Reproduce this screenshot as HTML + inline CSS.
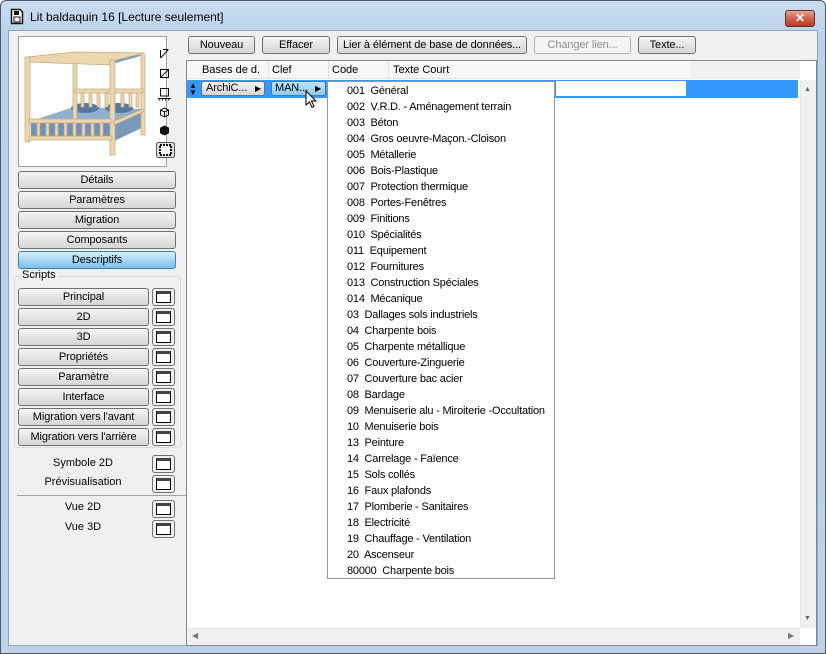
<!DOCTYPE html>
<html><head><meta charset="utf-8"><style>
*{box-sizing:border-box;margin:0;padding:0}
body{width:826px;height:654px;background:#fff;font-family:"Liberation Sans",Arial,sans-serif;font-size:11px;color:#000;position:relative;overflow:hidden}
.a{position:absolute}
.win{left:0;top:0;width:826px;height:654px;background:linear-gradient(#c9dcf0,#b9d1ea 40px,#bcd3eb);border:1px solid #4a5a6a;border-radius:6px 6px 0 0}
.client{left:8px;top:30px;width:810px;height:616px;background:#f0f0f0;border:1px solid #8ea4bd}
.btn{position:absolute;height:18px;border:1px solid #707070;border-radius:3px;background:linear-gradient(#f6f6f6,#e4e4e4 50%,#d6d6d6);text-align:center;line-height:16px;font-size:11px;letter-spacing:-0.1px}
.lb{left:18px;width:158px}
.sb{left:18px;width:131px}
.ic{position:absolute;left:152px;width:23px;height:18px;border:1px solid #707070;border-radius:3px;background:#f0f0f0}
.ic:after{content:"";position:absolute;left:3px;top:2px;width:15px;height:12px;box-sizing:border-box;border:1px solid #000;border-top:3px solid #444;background:#fff}
.lbl{position:absolute;left:18px;width:130px;text-align:center;top:0}
.menu{left:327px;top:81px;width:228px;height:498px;background:#fff;border:1px solid #979797}
.menu div{height:16px;line-height:16px;white-space:nowrap;font-size:11px;padding-left:19px;letter-spacing:-0.2px}
</style></head><body>
<div class="a win"></div>
<svg class="a" style="left:10px;top:8px" width="14" height="17"><path d="M1.5,1.5 H10 L12.5,4 V15.5 H1.5 Z" fill="#fff" stroke="#111" stroke-width="1.5"/><rect x="4" y="3" width="5" height="4" fill="#111"/><rect x="4" y="9" width="6" height="5" fill="none" stroke="#111"/></svg>
<div class="a" style="left:30px;top:10px;font-size:12px">Lit baldaquin 16 [Lecture seulement]</div>
<div class="a" style="left:785px;top:10px;width:30px;height:17px;border:1px solid #6b2b22;border-radius:3px;background:linear-gradient(#e8a597,#d0604c 50%,#b83a25);color:#fff;text-align:center;font-weight:bold;font-size:12px;line-height:15px">✕</div>
<div class="a client"></div>

<!-- preview -->
<div class="a" style="left:18px;top:36px;width:149px;height:131px;border:1px solid #a0a0a0;background:#fff;overflow:hidden">
<svg width="147" height="129" viewBox="0 0 147 129">
<polygon points="9,23 55,17 125,18 93,27" fill="#7c9fc0"/>
<polygon points="12,84 55,70 125,72 95,88" fill="#8fb0ce"/>
<rect x="12" y="84" width="83" height="18" fill="#6f93b6"/>
<polygon points="95,88 125,74 125,90 95,104" fill="#7899ba"/>
<ellipse cx="66" cy="71" rx="14" ry="5" fill="#55799c"/><ellipse cx="100" cy="71" rx="14" ry="5" fill="#55799c"/>
<g fill="#ecd6b0" stroke="#c5a67c" stroke-width=".7">
<rect x="54" y="17" width="4" height="66"/><rect x="122" y="18" width="4" height="80"/>
<rect x="56" y="52" width="68" height="4"/>
<rect x="62" y="56" width="3" height="14"/><rect x="70" y="56" width="3" height="14"/><rect x="78" y="56" width="3" height="14"/><rect x="86" y="56" width="3" height="14"/><rect x="102" y="56" width="3" height="14"/><rect x="110" y="56" width="3" height="14"/><rect x="117" y="56" width="3" height="14"/>
<polygon points="8,20 56,15 126,16 93,24 93,28 8,25"/>
<rect x="6" y="20" width="5" height="85"/><rect x="91" y="23" width="5" height="95"/>
<rect x="10" y="82" width="83" height="4"/><rect x="10" y="99" width="83" height="4"/>
<polygon points="95,84 124,72 124,75 95,88"/>
<rect x="18" y="86" width="3" height="13"/><rect x="27" y="86" width="3" height="13"/><rect x="36" y="86" width="3" height="13"/><rect x="45" y="86" width="3" height="13"/><rect x="54" y="86" width="3" height="13"/><rect x="63" y="86" width="3" height="13"/><rect x="72" y="86" width="3" height="13"/><rect x="81" y="86" width="3" height="13"/>
</g>
</svg></div>
<!-- view icons -->
<svg class="a" style="left:156px;top:44px" width="20" height="118" fill="none" stroke="#111" stroke-width="1">
<path d="M4.5,6 V14 M4.5,14 L12,6 M7,5.5 H12.5"/>
<rect x="4.5" y="25.5" width="8" height="8"/><path d="M4.5,33.5 L12.5,25.5"/>
<path d="M4.5,44.5 H12.5 V52 H4.5 Z M2,54.5 H15 M3,56.5 L4,55 M6,56.5 L7,55 M9,56.5 L10,55 M12,56.5 L13,55"/>
<path d="M8.5,64 L12.5,66 V71 L8.5,73 L4.5,71 V66 Z M4.5,66 L8.5,68 L12.5,66 M8.5,68 V73"/>
<path d="M8.5,82 L12.5,84 V89 L8.5,91 L4.5,89 V84 Z" fill="#111"/>
<rect x="0.5" y="98.5" width="18" height="15" rx="2" fill="#ddd" stroke="#555"/>
<rect x="4" y="101" width="11" height="10" fill="#fff" stroke="#111" stroke-width="2" stroke-dasharray="2 1"/>
</svg>

<div class="btn lb" style="top:171px">Détails</div>
<div class="btn lb" style="top:191px">Paramètres</div>
<div class="btn lb" style="top:211px">Migration</div>
<div class="btn lb" style="top:231px">Composants</div>
<div class="btn lb" style="top:251px;background:linear-gradient(#d8eefb,#a9d6f3 50%,#7cc0ea);border-color:#3c7fb1">Descriptifs</div>
<div class="a" style="left:14px;top:276px;width:167px;height:172px;border:1px solid #dcdcdc;border-radius:3px"></div>
<div class="a" style="left:20px;top:269px;background:#f0f0f0;padding:0 2px">Scripts</div>
<div class="btn sb" style="top:288px">Principal</div><div class="ic" style="top:288px"></div>
<div class="btn sb" style="top:308px">2D</div><div class="ic" style="top:308px"></div>
<div class="btn sb" style="top:328px">3D</div><div class="ic" style="top:328px"></div>
<div class="btn sb" style="top:348px">Propriétés</div><div class="ic" style="top:348px"></div>
<div class="btn sb" style="top:368px">Paramètre</div><div class="ic" style="top:368px"></div>
<div class="btn sb" style="top:388px">Interface</div><div class="ic" style="top:388px"></div>
<div class="btn sb" style="top:408px">Migration vers l'avant</div><div class="ic" style="top:408px"></div>
<div class="btn sb" style="top:428px">Migration vers l'arrière</div><div class="ic" style="top:428px"></div>
<div class="lbl" style="top:457px">Symbole 2D</div><div class="ic" style="top:455px"></div>
<div class="lbl" style="top:476px">Prévisualisation</div><div class="ic" style="top:475px"></div>
<div class="a" style="left:17px;top:495px;width:175px;height:1px;background:#a0a0a0"></div>
<div class="lbl" style="top:501px">Vue 2D</div><div class="ic" style="top:500px"></div>
<div class="lbl" style="top:521px">Vue 3D</div><div class="ic" style="top:520px"></div>

<!-- top buttons -->
<div class="btn" style="left:188px;top:36px;width:67px">Nouveau</div>
<div class="btn" style="left:262px;top:36px;width:68px">Effacer</div>
<div class="btn" style="left:337px;top:36px;width:190px">Lier à élément de base de données...</div>
<div class="btn" style="left:534px;top:36px;width:97px;color:#8d8d8d;border-color:#adb2b5;background:#f4f4f4">Changer lien...</div>
<div class="btn" style="left:638px;top:36px;width:58px">Texte...</div>

<!-- table -->
<div class="a" style="left:186px;top:60px;width:631px;height:586px;border:1px solid #828790;background:#fff"></div>
<div class="a" style="left:187px;top:61px;width:503px;height:18px;background:#f7f7f7;border-bottom:1px solid #e0e0e0"></div>
<div class="a" style="left:690px;top:61px;width:110px;height:18px;background:#f0f0f0"></div>
<div class="a" style="left:202px;top:64px">Bases de d.</div>
<div class="a" style="left:272px;top:64px">Clef</div>
<div class="a" style="left:332px;top:64px">Code</div>
<div class="a" style="left:393px;top:64px">Texte Court</div>
<div class="a" style="left:268px;top:61px;width:1px;height:18px;background:#e0e0e0"></div>
<div class="a" style="left:328px;top:61px;width:1px;height:18px;background:#e0e0e0"></div>
<div class="a" style="left:388px;top:61px;width:1px;height:18px;background:#e0e0e0"></div>
<div class="a" style="left:187px;top:80px;width:611px;height:18px;background:#3399ff"></div>
<div class="a" style="left:189px;top:82px;color:#000;font-size:8px;line-height:7px">▲<br>▼</div>
<div class="a" style="left:556px;top:81px;width:130px;height:15px;background:#fff"></div>
<div class="btn" style="left:201px;top:81px;width:64px;height:15px;line-height:13px;text-align:left;padding-left:4px;font-size:11px">ArchiC...<span style="position:absolute;right:3px;font-size:8px">▶</span></div>
<div class="btn" style="left:271px;top:81px;width:55px;height:15px;line-height:13px;text-align:left;padding-left:3px;background:linear-gradient(#bfe3f8,#8cc9ee);border-color:#3c7fb1">MAN...<span style="position:absolute;right:4px;font-size:8px">▶</span></div>
<svg class="a" style="left:305px;top:90px" width="12" height="19"><path d="M1,1 L1,15 L4.5,12 L7,17.5 L9,16.5 L6.5,11 L11,11 Z" fill="#fff" stroke="#000"/></svg>
<!-- scrollbars -->
<div class="a" style="left:800px;top:80px;width:16px;height:548px;background:#f0f0f0;border-left:1px solid #e6e6e6"></div>
<div class="a" style="left:804px;top:86px;font-size:7px;color:#666">▲</div>
<div class="a" style="left:804px;top:615px;font-size:7px;color:#666">▼</div>
<div class="a" style="left:187px;top:628px;width:613px;height:17px;background:#f0f0f0;border-top:1px solid #e6e6e6"></div>
<div class="a" style="left:192px;top:631px;font-size:8px;color:#777">◀</div>
<div class="a" style="left:788px;top:631px;font-size:8px;color:#777">▶</div>

<div class="a menu" style="padding-top:1px">
<div>001&nbsp; Général</div>
<div>002&nbsp; V.R.D. - Aménagement terrain</div>
<div>003&nbsp; Béton</div>
<div>004&nbsp; Gros oeuvre-Maçon.-Cloison</div>
<div>005&nbsp; Métallerie</div>
<div>006&nbsp; Bois-Plastique</div>
<div>007&nbsp; Protection thermique</div>
<div>008&nbsp; Portes-Fenêtres</div>
<div>009&nbsp; Finitions</div>
<div>010&nbsp; Spécialités</div>
<div>011&nbsp; Equipement</div>
<div>012&nbsp; Fournitures</div>
<div>013&nbsp; Construction Spéciales</div>
<div>014&nbsp; Mécanique</div>
<div>03&nbsp; Dallages sols industriels</div>
<div>04&nbsp; Charpente bois</div>
<div>05&nbsp; Charpente métallique</div>
<div>06&nbsp; Couverture-Zinguerie</div>
<div>07&nbsp; Couverture bac acier</div>
<div>08&nbsp; Bardage</div>
<div>09&nbsp; Menuiserie alu - Miroiterie -Occultation</div>
<div>10&nbsp; Menuiserie bois</div>
<div>13&nbsp; Peinture</div>
<div>14&nbsp; Carrelage - Faïence</div>
<div>15&nbsp; Sols collés</div>
<div>16&nbsp; Faux plafonds</div>
<div>17&nbsp; Plomberie - Sanitaires</div>
<div>18&nbsp; Electricité</div>
<div>19&nbsp; Chauffage - Ventilation</div>
<div>20&nbsp; Ascenseur</div>
<div>80000&nbsp; Charpente bois</div>
</div>
</body></html>
